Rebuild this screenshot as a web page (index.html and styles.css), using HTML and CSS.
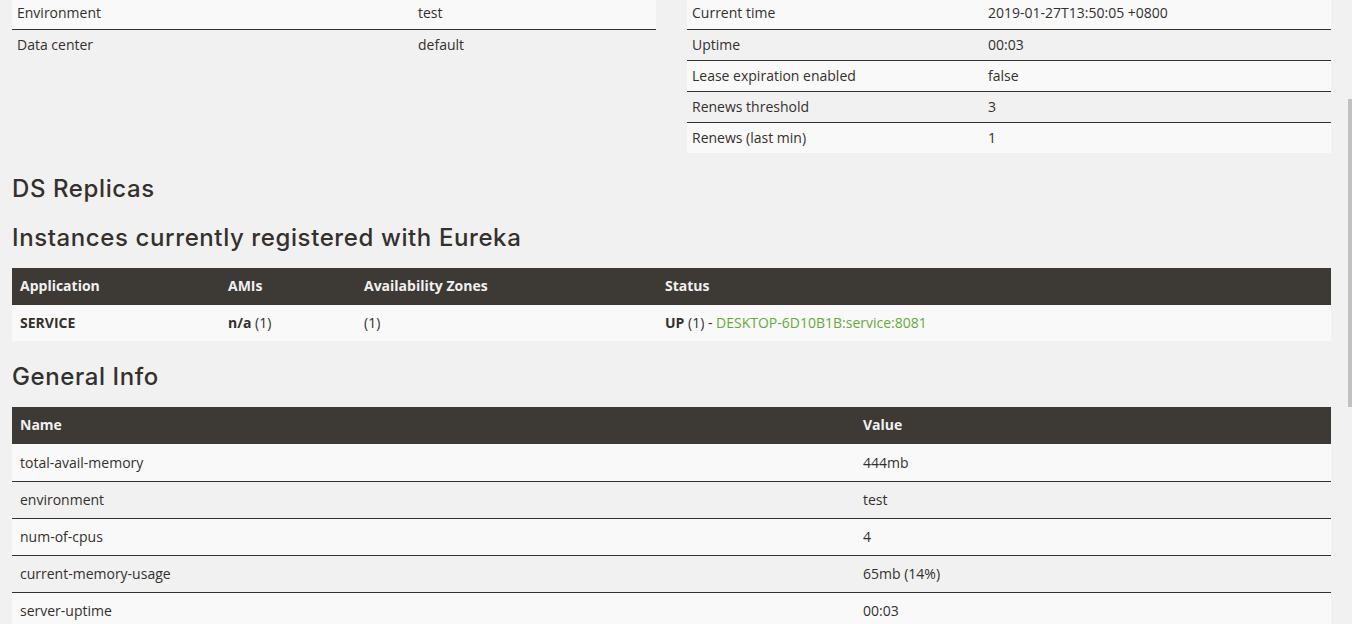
FILE: index.html
```html
<!DOCTYPE html>
<html lang="en">
<head>
<meta charset="utf-8">
<title>Eureka</title>
<link rel="stylesheet" href="styles.css">
</head>
<body>
<div class="container">
  <div class="status-grid">
    <table class="kv kv-left">
      <tbody>
        <tr class="odd"><td class="k">Environment</td><td>test</td></tr>
        <tr><td class="k">Data center</td><td>default</td></tr>
      </tbody>
    </table>
    <table class="kv kv-right">
      <tbody>
        <tr class="odd"><td class="k">Current time</td><td>2019-01-27T13:50:05 +0800</td></tr>
        <tr><td class="k">Uptime</td><td>00:03</td></tr>
        <tr class="odd"><td class="k">Lease expiration enabled</td><td>false</td></tr>
        <tr><td class="k">Renews threshold</td><td>3</td></tr>
        <tr class="odd"><td class="k">Renews (last min)</td><td>1</td></tr>
      </tbody>
    </table>
  </div>

  <h2 class="heading">DS Replicas</h2>

  <h2 class="heading">Instances currently registered with Eureka</h2>
  <table class="data instances">
    <thead>
      <tr><th class="c-app">Application</th><th class="c-ami">AMIs</th><th class="c-az">Availability Zones</th><th>Status</th></tr>
    </thead>
    <tbody>
      <tr class="odd"><td><b>SERVICE</b></td><td><b>n/a</b> (1)</td><td>(1)</td><td><b>UP</b> (1) - <a class="link" href="#">DESKTOP-6D10B1B:service:8081</a></td></tr>
    </tbody>
  </table>

  <h2 class="heading">General Info</h2>
  <table class="data general">
    <thead>
      <tr><th class="c-name">Name</th><th>Value</th></tr>
    </thead>
    <tbody>
      <tr class="odd"><td>total-avail-memory</td><td>444mb</td></tr>
      <tr><td>environment</td><td>test</td></tr>
      <tr class="odd"><td>num-of-cpus</td><td>4</td></tr>
      <tr><td>current-memory-usage</td><td>65mb (14%)</td></tr>
      <tr class="odd"><td>server-uptime</td><td>00:03</td></tr>
    </tbody>
  </table>
</div>
<div class="scroll-thumb"></div>
</body>
</html>
```
FILE: styles.css
```css
html, body {
  margin: 0;
  padding: 0;
  background: #f1f1f1;
  overflow: hidden;
  height: 624px;
}
body {
  font-family: "Open Sans", "Noto Sans", sans-serif;
  font-size: 14px;
  line-height: 20px;
  color: #34302d;
  position: relative;
}
.container {
  width: 1319px;
  margin-left: 12px;
}
.status-grid {
  display: grid;
  grid-template-columns: 644px 644px;
  column-gap: 31px;
  align-items: start;
  margin-top: -3px;
}
table {
  border-collapse: collapse;
  border-spacing: 0;
}
.kv {
  width: 644px;
  table-layout: fixed;
}
.kv td {
  padding: 5px 5px;
  border-top: 1px solid #34302d;
  text-align: left;
  vertical-align: top;
}
.kv tr:first-child td {
  border-top: none;
  padding-top: 6px;
  padding-bottom: 6px;
}
.kv-left td.k { width: 391px; }
.kv-right td.k { width: 286px; }
tr.odd td { background: #f9f9f9; }

.heading {
  font-family: "Inter", "Noto Sans", sans-serif;
  font-weight: 500;
  font-size: 24px;
  line-height: 26px;
  letter-spacing: 0.6px;
  margin: 23px 0 17px;
  color: #34302d;
}

.data {
  width: 1319px;
  table-layout: fixed;
}
.data th {
  background: #3d3934;
  color: #f1f1f1;
  font-weight: bold;
  text-align: left;
  padding: 8px 8px 9px;
  border: none;
}
.data td {
  padding: 8px;
  text-align: left;
  border-top: 1px solid #34302d;
}
.data tbody tr:first-child td { border-top: none; }
.general tbody tr:first-child td { padding-top: 9px; }
.instances .c-app { width: 192px; }
.instances .c-ami { width: 120px; }
.instances .c-az { width: 285px; }
.general .c-name { width: 827px; }
b { font-weight: bold; }
.link {
  color: #64aa3a;
  text-decoration: none;
}
.scroll-thumb {
  position: absolute;
  left: 1348px;
  top: 99px;
  width: 4px;
  height: 308px;
  background: #c1c1c1;
}
```
